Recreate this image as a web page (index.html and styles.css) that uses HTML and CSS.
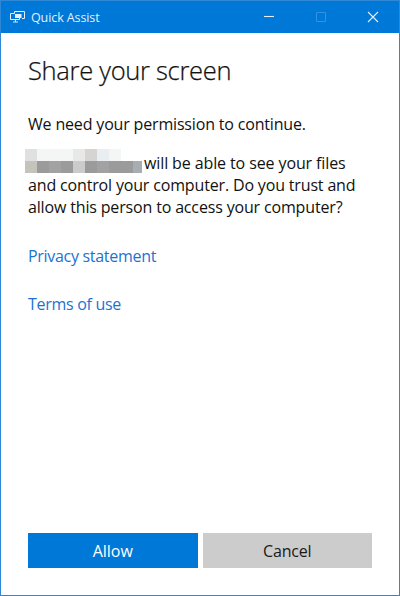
FILE: index.html
```html
<!DOCTYPE html>
<html lang="en">
<head>
  <meta charset="UTF-8">
  <meta name="viewport" content="width=device-width, initial-scale=1.0">
  <title>Quick Assist</title>
  <link rel="stylesheet" href="styles.css">
</head>
<body>
  <div class="window">
    <header class="titlebar">
      <svg class="app-icon" width="16" height="14" viewBox="0 0 16 14" fill="none" stroke="currentColor">
        <path d="M4.5 3.5v-2h10v7H12"/>
        <path d="M4.5 3.5h-4v6h9V8"/>
        <path d="M5 4h6.5v4H5z" fill="currentColor" stroke="none"/>
        <path d="M3 12h5M5.5 9.5V12" stroke-width=".9"/>
      </svg>
      <span class="app-name">Quick Assist</span>
      <div class="controls">
        <svg class="control" width="12" height="12" viewBox="0 0 12 12"><path d="M1 5.5h10"/></svg>
        <svg class="control disabled" width="12" height="12" viewBox="0 0 12 12"><path d="M1.5 1.5h9v9h-9z"/></svg>
        <svg class="control" width="12" height="12" viewBox="0 0 12 12"><path d="M1 1l10 10M11 1L1 11"/></svg>
      </div>
    </header>

    <main class="content">
      <h1 class="title">Share your screen</h1>
      <p class="intro">We need your permission to continue.</p>
      <p class="message">
        <span class="line first"><span class="redacted"><i class="c1"></i><i class="c2"></i><i class="c2"></i><i class="c2"></i><i class="c3"></i><i class="c4"></i><i class="c5"></i><i class="c2"></i><i></i><i></i><i class="d1"></i><i class="d2"></i><i class="d3"></i><i class="d2"></i><i class="d4"></i><i class="d2"></i><i class="d3"></i><i class="d2"></i><i class="d2"></i><i class="d5"></i></span>will be able to see your files</span>
        <span class="line">and control your computer. Do you trust and</span>
        <span class="line">allow this person to access your computer?</span>
      </p>
      <a class="link privacy" href="#">Privacy statement</a>
      <a class="link terms" href="#">Terms of use</a>
      <div class="buttons">
        <button class="btn primary">Allow</button>
        <button class="btn">Cancel</button>
      </div>
    </main>
  </div>
</body>
</html>
```

FILE: styles.css
```css
* {
  box-sizing: border-box;
  margin: 0;
  padding: 0;
}

body {
  font-family: "Segoe UI", "Open Sans", "Noto Sans", sans-serif;
  font-size: 16px;
  color: #111;
  background: #fff;
}

.window {
  display: flex;
  flex-direction: column;
  width: 400px;
  height: 596px;
  border: 1px solid #2f88d6;
}

.titlebar {
  display: flex;
  align-items: center;
  height: 32px;
  padding: 0 20px 0 9px;
  background: #0078d7;
  color: #e3f0fb;
}

.app-icon {
  margin-right: 5px;
}

.app-name {
  font-size: 12.5px;
  letter-spacing: -0.1px;
}

.controls {
  display: flex;
  gap: 40px;
  margin-left: auto;
}

.control {
  fill: none;
  stroke: #e3f0fb;
  stroke-width: 1.1;
}

.control.disabled {
  stroke: #2f92e2;
  stroke-width: 1;
}

.content {
  display: flex;
  flex: 1;
  flex-direction: column;
  align-items: flex-start;
  padding: 0 27px 27px;
  white-space: nowrap;
}

.title {
  margin-top: 19px;
  font-size: 25.5px;
  font-weight: 300;
  line-height: 36px;
  letter-spacing: -0.3px;
  -webkit-text-stroke: 0.25px #111;
}

.intro {
  margin-top: 25px;
  line-height: 22px;
  letter-spacing: -0.17px;
}

.message {
  margin-top: 17px;
  line-height: 22px;
  letter-spacing: -0.16px;
}

.line {
  display: block;
}

.first {
  display: flex;
  letter-spacing: -0.11px;
}

/* pixelated name of the other person */
.redacted {
  display: grid;
  grid-template-columns: repeat(9, 12px) 9px;
  grid-template-rows: 12px 12px;
  height: 22px;
  margin: -3px 2px 3px -3px;
}

.c1 { background: #e0e0e3; }
.c2 { background: #f4f6f6; }
.c3 { background: #e8e8e8; }
.c4 { background: #d5d4d2; }
.c5 { background: #e9eef2; }
.d1 { background: #c6c2bc; }
.d2 { background: #9b9b9b; }
.d3 { background: #a2a2a2; }
.d4 { background: #cbcbcb; }
.d5 { background: #a8adb1; }

.link {
  color: #1a73d2;
  line-height: 22px;
  letter-spacing: -0.3px;
  text-decoration: none;
}

.privacy {
  margin-top: 27px;
}

.terms {
  margin-top: 26px;
}

.buttons {
  display: flex;
  gap: 5px;
  width: 344px;
  margin-top: auto;
}

.btn {
  flex: 1;
  height: 35px;
  border: none;
  background: #ccc;
  color: #1a1a1a;
  font-family: inherit;
  font-size: 16px;
  letter-spacing: -0.2px;
}

.btn.primary {
  background: #0078d7;
  color: #fff;
  letter-spacing: 0;
}
```
